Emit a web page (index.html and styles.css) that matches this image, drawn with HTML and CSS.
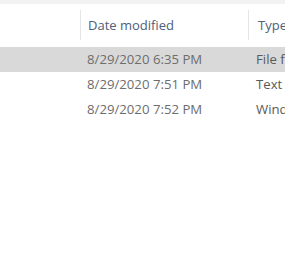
FILE: index.html
```html
<!DOCTYPE html>
<html lang="en">
<head>
    <meta charset="UTF-8">
    <title>Files</title>
    <link rel="stylesheet" href="styles.css">
</head>
<body>
    <div class="top-strip"></div>
    <div class="file-list">
        <div class="header">
            <div class="col name"></div>
            <div class="col date">Date modified</div>
            <div class="col type">Type</div>
        </div>
        <div class="row selected">
            <div class="col name"></div>
            <div class="col date">8/29/2020 6:35 PM</div>
            <div class="col type">File folder</div>
        </div>
        <div class="row">
            <div class="col name"></div>
            <div class="col date">8/29/2020 7:51 PM</div>
            <div class="col type">Text Document</div>
        </div>
        <div class="row">
            <div class="col name"></div>
            <div class="col date">8/29/2020 7:52 PM</div>
            <div class="col type">Windows Batch File</div>
        </div>
    </div>
</body>
</html>
```

FILE: styles.css
```css
body {
    margin: 0;
    padding: 0;
    background-color: white;
    font-family: "Open Sans", "Noto Sans", sans-serif;
    overflow: hidden;
    width: 285px;
    height: 275px;
}

.top-strip {
    height: 4px;
    background-color: #f2f2f2;
}

.file-list {
    padding-top: 6px;
}

.header,
.row {
    display: flex;
    white-space: nowrap;
}

.col {
    overflow: hidden;
    flex-shrink: 0;
}

.name {
    width: 80px;
}

.date {
    width: 160px;
    padding-left: 7px;
}

/* last column runs into the window edge and gets clipped there */
.type {
    flex: 1;
    min-width: 0;
    padding-left: 9px;
}

.header {
    height: 30px;
    margin-bottom: 7px;
}

.header .col {
    color: #4c607a;
    font-size: 13px;
    line-height: 30px;
}

.header .date,
.header .type {
    border-left: 1px solid #e5e5e5;
}

.row {
    height: 25px;
    line-height: 25px;
    font-size: 13.2px;
    color: #6d6d6d;
}

.row .type {
    color: #5a5a5a;
}

.row.selected {
    background-color: #d9d9d9;
}
```
